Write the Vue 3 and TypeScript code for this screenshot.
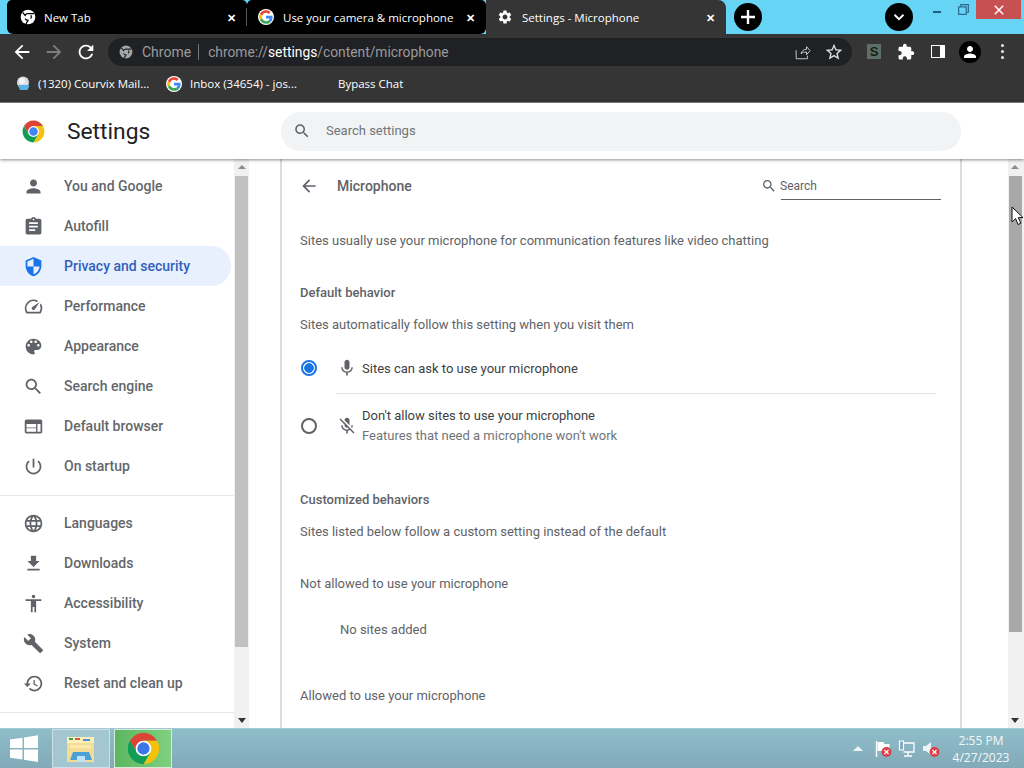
<template>
  <div class="screen">
    <!-- tab strip -->
    <div class="tabstrip">
      <div class="tab tab-dark tab-first">
        <svg class="tab-icon" viewBox="0 0 48 48">
          <circle cx="24" cy="24" r="22" fill="#fff" />
          <path d="M24 14a10 10 0 0 0-8.66 5L8 10M24 14h19M15.34 29a10 10 0 0 0 8.66 5l-6 11M33 19a10 10 0 0 1-1 10" fill="none" stroke="#000" stroke-width="4" />
          <circle cx="24" cy="24" r="7" fill="#fff" />
        </svg>
        <span class="tab-title">New Tab</span>
        <span class="tab-x">✕</span>
      </div>
      <div class="tab tab-dark tab-second">
        <svg class="tab-icon google" viewBox="-4 -4 56 56">
          <circle cx="24" cy="24" r="28" fill="#fff" />
          <path v-for="p in googlePaths" :key="p.fill" :d="p.d" :fill="p.fill" />
        </svg>
        <span class="tab-title">Use your camera &amp; microphone</span>
        <span class="tab-x">✕</span>
      </div>
      <div class="tab tab-active">
        <svg class="tab-icon" viewBox="0 0 24 24"><path :d="icons.gear" fill="#fff" /></svg>
        <span class="tab-title">Settings - Microphone</span>
        <span class="tab-x">✕</span>
      </div>
      <div class="round-btn new-tab">
        <svg viewBox="0 0 20 20" width="20" height="20"><path d="M10 3v14M3 10h14" stroke="#fff" stroke-width="2.4" /></svg>
      </div>
      <div class="strip-spacer"></div>
      <div class="round-btn">
        <svg viewBox="0 0 20 20" width="18" height="18"><path d="M5 7.5l5 5 5-5" fill="none" stroke="#fff" stroke-width="2" /></svg>
      </div>
      <div class="win-controls">
        <div class="win-btn"><span class="min-line"></span></div>
        <div class="win-btn">
          <svg viewBox="0 0 12 12" width="11" height="11"><path d="M3 3V.7h8.3V9H9M.7 3.2H9v8.1H.7z" fill="none" stroke="#2b6a8c" stroke-width="1.3" /></svg>
        </div>
        <div class="win-close">
          <svg viewBox="0 0 12 12" width="10" height="10"><path d="M1 1l10 10M11 1L1 11" stroke="#fff" stroke-width="1.8" /></svg>
        </div>
      </div>
    </div>

    <!-- toolbar -->
    <div class="toolbar">
      <div class="tool-btn"><svg viewBox="0 0 24 24" width="22" height="22"><path :d="icons.back" fill="#fff" /></svg></div>
      <div class="tool-btn"><svg class="flip" viewBox="0 0 24 24" width="22" height="22"><path :d="icons.back" fill="#7d7e80" /></svg></div>
      <div class="tool-btn"><svg viewBox="0 0 24 24" width="22" height="22"><path :d="icons.refresh" fill="#fff" /></svg></div>
      <div class="omnibox">
        <svg class="omni-logo" viewBox="0 0 48 48">
          <circle cx="24" cy="24" r="22" fill="#a5a6a8" />
          <path d="M24 14a10 10 0 0 0-8.66 5L8 10M24 14h19M15.34 29a10 10 0 0 0 8.66 5l-6 11M33 19a10 10 0 0 1-1 10" fill="none" stroke="#202124" stroke-width="4" />
        </svg>
        <span class="omni-chrome">Chrome</span>
        <span class="omni-sep"></span>
        <span class="omni-url">chrome://<b>settings</b>/content/microphone</span>
        <span class="omni-spacer"></span>
        <div class="omni-btn">
          <svg viewBox="0 0 20 20" width="18" height="18"><path d="M3.5 8v9.5H16V14M9 12c.4-3.200 3-5 6-5V4l4 4.500-4 4.500v-3c-2.500 0-4.700.6-6 1.800z" fill="none" stroke="#c4c5c7" stroke-width="1.100" /></svg>
        </div>
        <div class="omni-btn"><svg viewBox="0 0 24 24" width="20" height="20"><path :d="icons.star" fill="#dfe0e2" /></svg></div>
      </div>
      <div class="ext-group">
        <div class="tool-btn"><span class="ext-s">S</span></div>
        <div class="tool-btn"><svg viewBox="0 0 24 24" width="18" height="18"><path :d="icons.puzzle" fill="#fff" /></svg></div>
        <div class="tool-btn"><span class="side-panel"></span></div>
        <div class="tool-btn">
          <span class="avatar"><svg viewBox="0 0 24 24" width="18" height="18"><path :d="icons.person" fill="#fff" /></svg></span>
        </div>
        <div class="tool-btn"><span class="dots"><i></i><i></i><i></i></span></div>
      </div>
    </div>

    <!-- bookmarks -->
    <div class="bookmarks">
      <div class="bookmark bm-courvix">
        <svg class="bm-icon" viewBox="0 0 16 16">
          <circle cx="8" cy="6.500" r="6" fill="#d7dde2" />
          <path d="M3 9h10c1 0 1.500 1 1 2l-1.500 3H5z" fill="#5ab3e6" />
          <circle cx="7" cy="5" r="3" fill="#f2f4f5" />
        </svg>
        <span>(1320) Courvix Mail...</span>
      </div>
      <div class="bookmark bm-inbox">
        <svg class="bm-icon" viewBox="-4 -4 56 56">
          <circle cx="24" cy="24" r="28" fill="#fff" />
          <path v-for="p in googlePaths" :key="p.fill" :d="p.d" :fill="p.fill" />
        </svg>
        <span>Inbox (34654) - jos...</span>
      </div>
      <div class="bookmark bm-bypass"><span>Bypass Chat</span></div>
    </div>

    <!-- settings header -->
    <header class="settings-header">
      <svg class="settings-logo" viewBox="3 3 42 42">
        <path v-for="p in chromePaths" :key="p.fill" :d="p.d" :fill="p.fill" />
        <circle cx="24" cy="24" r="10" fill="#fff" />
        <circle cx="24" cy="24" r="7.800" fill="#4285f4" />
      </svg>
      <h1 class="settings-title">Settings</h1>
      <div class="search-box">
        <svg viewBox="0 0 24 24" width="18" height="18"><path :d="icons.search" fill="#5f6368" /></svg>
        <span>Search settings</span>
      </div>
    </header>

    <!-- body -->
    <div class="body">
      <nav class="sidebar">
        <div class="nav-list">
          <template v-for="(group, i) in navGroups" :key="i">
            <div v-for="item in group" :key="item.label" :class="['nav-item', { active: item.active }]">
              <svg viewBox="0 0 24 24" width="21" height="21" class="nav-icon"><path :d="item.icon" /></svg>
              <span>{{ item.label }}</span>
            </div>
            <div class="nav-divider"></div>
          </template>
        </div>
        <div class="scrollbar side-scroll">
          <span class="arrow-up"></span>
          <div class="thumb side-thumb"></div>
          <span class="track-fill"></span>
          <span class="arrow-down"></span>
        </div>
      </nav>

      <main class="content">
        <section class="card">
          <div class="card-head">
            <svg class="head-back" viewBox="0 0 24 24" width="20" height="20"><path :d="icons.back" fill="#5f6368" /></svg>
            <h2>Microphone</h2>
            <div class="card-search">
              <svg viewBox="0 0 24 24" width="16" height="16"><path :d="icons.search" fill="#5f6368" /></svg>
              <span>Search</span>
            </div>
          </div>

          <p class="line intro">Sites usually use your microphone for communication features like video chatting</p>
          <h3 class="line heading">Default behavior</h3>
          <p class="line sub">Sites automatically follow this setting when you visit them</p>

          <div class="radio-row first">
            <span class="radio checked"></span>
            <svg class="radio-icon" viewBox="0 0 24 24" width="20" height="20"><path :d="icons.mic" fill="#5f6368" /></svg>
            <span class="radio-label">Sites can ask to use your microphone</span>
          </div>
          <div class="radio-divider"></div>
          <div class="radio-row second">
            <span class="radio"></span>
            <svg class="radio-icon" viewBox="0 0 24 24" width="20" height="20"><path :d="icons.micOff" fill="#5f6368" /></svg>
            <div class="radio-text">
              <span class="radio-label">Don't allow sites to use your microphone</span>
              <span class="radio-sub">Features that need a microphone won't work</span>
            </div>
          </div>

          <h3 class="line heading custom">Customized behaviors</h3>
          <p class="line sub">Sites listed below follow a custom setting instead of the default</p>
          <p class="line block-title">Not allowed to use your microphone</p>
          <p class="line empty">No sites added</p>
          <p class="line allowed">Allowed to use your microphone</p>
        </section>

        <svg class="cursor" viewBox="0 0 13 20" width="13" height="20">
          <path d="M1 1v15l3.600-3.400 2.400 5.900 2.800-1.200-2.500-5.700H12z" fill="#fff" stroke="#111" stroke-width="1" />
        </svg>

        <div class="scrollbar main-scroll">
          <span class="arrow-up"></span>
          <div class="thumb main-thumb"></div>
          <span class="track-fill"></span>
          <span class="arrow-down"></span>
        </div>
      </main>
    </div>

    <!-- taskbar -->
    <footer class="taskbar">
      <div class="start">
        <svg viewBox="0 0 28 27" width="28" height="27">
          <path d="M0 4.500 12.500 2.700V13H0zM14 2.500 28 .3V13H14zM0 14.500h12.500v10L0 22.800zM14 14.500h14V27l-14-2.200z" fill="#fff" />
        </svg>
      </div>
      <div class="task-btn folder">
        <svg viewBox="0 0 32 32" width="32" height="32">
          <path d="M2 4h27v25H2z" fill="#f3dc94" />
          <path d="M2 4h27v6H2z" fill="#fbeeb9" />
          <path d="M4 5h4v2H4z" fill="#3fa34d" />
          <path d="M10 5h5v2h-5z" fill="#d9544d" />
          <path d="M18 6h7v2h-7z" fill="#4d8fd1" />
          <path d="M5 12h21v3H5z" fill="#f9e9ae" />
          <path d="M8 19h16l3 8H5z" fill="#4ba0d8" />
          <path d="M12 23h8v6h-8z" fill="#bfe3f5" />
        </svg>
      </div>
      <div class="task-btn chrome">
        <svg viewBox="3 3 42 42" width="33" height="33">
          <path v-for="p in chromePaths" :key="p.fill" :d="p.d" :fill="p.fill" />
          <circle cx="24" cy="24" r="10" fill="#fff" />
          <circle cx="24" cy="24" r="7.800" fill="#3b78e7" />
        </svg>
      </div>
      <div class="task-spacer"></div>
      <div class="tray">
        <span class="tray-chevron"></span>
        <div class="tray-icon">
          <svg viewBox="0 0 18 18" width="18" height="18">
            <path d="M2.500 1v16" stroke="#fff" stroke-width="1.400" />
            <path d="M3.500 2h6l1 2h5v7h-12z" fill="#fff" />
            <circle cx="12.500" cy="12" r="5" fill="#d9424a" />
            <path d="M10.500 10l4 4M14.500 10l-4 4" stroke="#fff" stroke-width="1.200" />
          </svg>
        </div>
        <div class="tray-icon">
          <svg viewBox="0 0 18 18" width="18" height="18">
            <path d="M5.500 3H16v9H5.500" fill="none" stroke="#fff" stroke-width="1.300" />
            <path d="M1.500 1h4v9h-4z" fill="#7fa8b8" stroke="#fff" stroke-width="1.200" />
            <path d="M10 12v3M6 16h8" stroke="#fff" stroke-width="1.400" />
          </svg>
        </div>
        <div class="tray-icon">
          <svg viewBox="0 0 18 18" width="18" height="18">
            <path d="M1 6h3l5-4v13l-5-4H1z" fill="#eef4f6" />
            <circle cx="12.500" cy="12" r="5" fill="#d9424a" />
            <path d="M10.500 10l4 4M14.500 10l-4 4" stroke="#fff" stroke-width="1.200" />
          </svg>
        </div>
      </div>
      <div class="clock">
        <span>2:55 PM</span>
        <span>4/27/2023</span>
      </div>
    </footer>
  </div>
</template>

<script setup lang="ts">
interface NavItem {
  label: string;
  icon: string;
  active?: boolean;
}

const icons = {
  person: 'M12 12c2.210 0 4-1.790 4-4s-1.790-4-4-4-4 1.790-4 4 1.790 4 4 4zm0 2c-2.670 0-8 1.340-8 4v2h16v-2c0-2.660-5.330-4-8-4z',
  assignment: 'M19 3h-4.180C14.400 1.840 13.300 1 12 1c-1.300 0-2.400.84-2.820 2H5c-1.100 0-2 .9-2 2v14c0 1.100.9 2 2 2h14c1.100 0 2-.9 2-2V5c0-1.100-.9-2-2-2zm-7 0c.55 0 1 .45 1 1s-.45 1-1 1-1-.45-1-1 .45-1 1-1zm2 14H7v-2h7v2zm3-4H7v-2h10v2zm0-4H7V7h10v2z',
  shield: 'M12 1L3 5v6c0 5.550 3.840 10.740 9 12 5.160-1.260 9-6.450 9-12V5l-9-4zm0 10.990h7c-.53 4.120-3.280 7.790-7 8.940V12H5V6.300l7-3.110v8.800z',
  speed: 'M20.380 8.570l-1.230 1.850a8 8 0 0 1-.22 7.580H5.070A8 8 0 0 1 15.580 6.850l1.850-1.230A10 10 0 0 0 3.350 19a2 2 0 0 0 1.720 1h13.850a2 2 0 0 0 1.740-1 10 10 0 0 0-.27-10.440zm-9.790 6.840a2 2 0 0 0 2.830 0l5.660-8.490-8.490 5.660a2 2 0 0 0 0 2.830z',
  palette: 'M12 3c-4.970 0-9 4.030-9 9s4.030 9 9 9c.83 0 1.500-.67 1.500-1.500 0-.39-.15-.74-.39-1.010-.23-.26-.38-.61-.38-.99 0-.83.67-1.500 1.500-1.500H16c2.760 0 5-2.240 5-5 0-4.420-4.030-8-9-8zm-5.500 9c-.83 0-1.500-.67-1.500-1.500S5.670 9 6.500 9 8 9.670 8 10.500 7.330 12 6.500 12zm3-4C8.670 8 8 7.330 8 6.500S8.670 5 9.500 5s1.500.67 1.500 1.500S10.330 8 9.500 8zm5 0c-.83 0-1.500-.67-1.500-1.500S13.670 5 14.500 5s1.500.67 1.500 1.500S15.330 8 14.500 8zm3 4c-.83 0-1.500-.67-1.500-1.500S16.670 9 17.500 9s1.500.67 1.500 1.500-.67 1.500-1.500 1.500z',
  search: 'M15.500 14h-.79l-.28-.27C15.410 12.590 16 11.110 16 9.500 16 5.910 13.090 3 9.500 3S3 5.910 3 9.500 5.910 16 9.500 16c1.610 0 3.090-.59 4.230-1.570l.27.28v.79l5 4.990L20.490 19l-4.990-5zm-6 0C7.010 14 5 11.990 5 9.500S7.010 5 9.500 5 14 7.010 14 9.500 11.990 14 9.500 14z',
  web: 'M20 4H4c-1.100 0-2 .9-2 2v12c0 1.100.9 2 2 2h16c1.100 0 2-.9 2-2V6c0-1.100-.9-2-2-2zM4 18v-4h11v4H4zm11-5H4V9h11v4zm5 5h-3.500V9H20v9z',
  power: 'M13 3h-2v10h2V3zm4.830 2.170l-1.420 1.420C17.990 7.860 19 9.810 19 12c0 3.870-3.130 7-7 7s-7-3.130-7-7c0-2.190 1.010-4.140 2.580-5.420L6.170 5.170C4.230 6.820 3 9.260 3 12c0 4.970 4.030 9 9 9s9-4.030 9-9c0-2.740-1.230-5.180-3.170-6.830z',
  language: 'M11.990 2C6.470 2 2 6.480 2 12s4.470 10 9.990 10C17.520 22 22 17.520 22 12S17.520 2 11.990 2zm6.930 6h-2.950c-.32-1.250-.78-2.450-1.380-3.560 1.840.63 3.370 1.910 4.330 3.560zM12 4.040c.83 1.200 1.480 2.530 1.910 3.960h-3.820c.43-1.430 1.080-2.760 1.910-3.960zM4.260 14C4.100 13.360 4 12.690 4 12s.1-1.360.26-2h3.380c-.08.66-.14 1.320-.14 2 0 .68.06 1.340.14 2H4.260zm.82 2h2.950c.32 1.250.78 2.450 1.380 3.560-1.840-.63-3.370-1.900-4.330-3.560zm2.950-8H5.080c.96-1.660 2.490-2.930 4.330-3.560C8.810 5.550 8.350 6.750 8.030 8zM12 19.960c-.83-1.200-1.480-2.530-1.910-3.960h3.820c-.43 1.430-1.080 2.760-1.910 3.960zM14.340 14H9.660c-.09-.66-.16-1.320-.16-2 0-.68.07-1.350.16-2h4.680c.09.65.16 1.320.16 2 0 .68-.07 1.340-.16 2zm.25 5.560c.6-1.110 1.060-2.310 1.380-3.560h2.950c-.96 1.650-2.490 2.930-4.330 3.560zM16.360 14c.08-.66.14-1.320.14-2 0-.68-.06-1.340-.14-2h3.380c.16.64.26 1.310.26 2s-.1 1.360-.26 2h-3.380z',
  download: 'M19 9h-4V3H9v6H5l7 7 7-7zM5 18v2h14v-2H5z',
  accessibility: 'M12 2c1.100 0 2 .9 2 2s-.9 2-2 2-2-.9-2-2 .9-2 2-2zm9 7h-6v13h-2v-6h-2v6H9V9H3V7h18v2z',
  wrench: 'M22.700 19l-9.100-9.100c.9-2.300.4-5-1.500-6.900-2-2-5-2.400-7.400-1.300L9 6 6 9 1.600 4.700C.4 7.100.9 10.100 2.900 12.100c1.900 1.900 4.600 2.400 6.900 1.500l9.100 9.100c.4.4 1 .4 1.400 0l2.300-2.300c.5-.4.5-1.100.1-1.400z',
  restore: 'M13 3c-4.970 0-9 4.030-9 9H1l3.890 3.890.07.14L9 12H6c0-3.870 3.130-7 7-7s7 3.130 7 7-3.130 7-7 7c-1.930 0-3.680-.79-4.940-2.060l-1.420 1.420C8.270 19.990 10.510 21 13 21c4.970 0 9-4.030 9-9s-4.030-9-9-9zm-1 5v5l4.280 2.540.72-1.210-3.500-2.080V8H12z',
  mic: 'M12 14c1.660 0 2.990-1.340 2.990-3L15 5c0-1.660-1.340-3-3-3S9 3.340 9 5v6c0 1.660 1.340 3 3 3zm5.300-3c0 3-2.540 5.100-5.300 5.100S6.700 14 6.700 11H5c0 3.410 2.720 6.230 6 6.720V21h2v-3.280c3.280-.48 6-3.300 6-6.720h-1.700z',
  micOff: 'M19 11h-1.700c0 .74-.16 1.430-.43 2.050l1.230 1.230c.56-.98.9-2.090.9-3.280zm-4.020.17c0-.06.02-.11.02-.17V5c0-1.660-1.340-3-3-3S9 3.340 9 5v.18l5.980 5.990zM4.270 3L3 4.270l6.010 6.010V11c0 1.660 1.330 3 2.990 3 .22 0 .44-.03.65-.08l1.660 1.660c-.71.33-1.500.52-2.310.52-2.760 0-5.300-2.100-5.300-5.100H5c0 3.410 2.720 6.230 6 6.720V21h2v-3.280c.91-.13 1.770-.45 2.540-.9L19.730 21 21 19.730 4.270 3z',
  back: 'M20 11H7.830l5.590-5.590L12 4l-8 8 8 8 1.410-1.410L7.830 13H20v-2z',
  refresh: 'M17.650 6.350C16.200 4.900 14.350 4 12 4c-4.420 0-7.990 3.580-7.990 8s3.570 8 7.990 8c3.730 0 6.840-2.550 7.730-6h-2.080c-.82 2.330-3.040 4-5.650 4-3.310 0-6-2.690-6-6s2.690-6 6-6c1.660 0 3.140.69 4.220 1.780L13 11h7V4l-2.350 2.350z',
  puzzle: 'M20.500 11H19V7c0-1.100-.9-2-2-2h-4V3.500C13 2.120 11.880 1 10.500 1S8 2.120 8 3.500V5H4c-1.100 0-1.990.9-1.990 2v3.800H3.500c1.490 0 2.700 1.210 2.700 2.700s-1.210 2.700-2.700 2.700H2V20c0 1.100.9 2 2 2h3.800v-1.500c0-1.490 1.210-2.700 2.700-2.700 1.490 0 2.700 1.210 2.700 2.700V22H17c1.100 0 2-.9 2-2v-4h1.500c1.380 0 2.500-1.120 2.500-2.500S21.880 11 20.500 11z',
  star: 'M22 9.240l-7.190-.62L12 2 9.190 8.630 2 9.240l5.460 4.730L5.820 21 12 17.270 18.180 21l-1.630-7.030L22 9.240zM12 15.400l-3.760 2.270 1-4.280-3.320-2.880 4.380-.38L12 6.100l1.710 4.040 4.380.38-3.320 2.880 1 4.280L12 15.400z',
  gear: 'M19.140 12.940c.04-.3.06-.61.06-.94 0-.32-.02-.64-.07-.94l2.030-1.580c.18-.14.23-.41.12-.61l-1.920-3.320c-.12-.22-.37-.29-.59-.22l-2.390.96c-.5-.38-1.030-.7-1.620-.94l-.36-2.540c-.04-.24-.24-.41-.48-.41h-3.840c-.24 0-.43.17-.47.41l-.36 2.540c-.59.24-1.130.57-1.620.94l-2.390-.96c-.22-.08-.47 0-.59.22L2.740 8.870c-.12.21-.08.47.12.61l2.030 1.580c-.05.3-.09.63-.09.94s.02.64.07.94l-2.030 1.580c-.18.14-.23.41-.12.61l1.920 3.320c.12.22.37.29.59.22l2.390-.96c.5.38 1.030.7 1.620.94l.36 2.540c.05.24.24.41.48.41h3.840c.24 0 .44-.17.47-.41l.36-2.540c.59-.24 1.130-.56 1.620-.94l2.390.96c.22.08.47 0 .59-.22l1.920-3.320c.12-.22.07-.47-.12-.61l-2.010-1.580zM12 15.600c-1.980 0-3.600-1.620-3.600-3.600s1.620-3.600 3.600-3.600 3.600 1.620 3.600 3.600-1.620 3.600-3.600 3.600z',
};

const navGroups: NavItem[][] = [
  [
    { label: 'You and Google', icon: icons.person },
    { label: 'Autofill', icon: icons.assignment },
    { label: 'Privacy and security', icon: icons.shield, active: true },
    { label: 'Performance', icon: icons.speed },
    { label: 'Appearance', icon: icons.palette },
    { label: 'Search engine', icon: icons.search },
    { label: 'Default browser', icon: icons.web },
    { label: 'On startup', icon: icons.power },
  ],
  [
    { label: 'Languages', icon: icons.language },
    { label: 'Downloads', icon: icons.download },
    { label: 'Accessibility', icon: icons.accessibility },
    { label: 'System', icon: icons.wrench },
    { label: 'Reset and clean up', icon: icons.restore },
  ],
];

const googlePaths = [
  { fill: '#EA4335', d: 'M24 9.500c3.540 0 6.710 1.220 9.210 3.600l6.850-6.850C35.900 2.380 30.470 0 24 0 14.620 0 6.510 5.380 2.560 13.220l7.980 6.190C12.430 13.720 17.740 9.500 24 9.500z' },
  { fill: '#4285F4', d: 'M46.980 24.550c0-1.570-.15-3.090-.38-4.550H24v9.020h12.940c-.58 2.960-2.260 5.480-4.780 7.180l7.730 6c4.510-4.180 7.090-10.360 7.090-17.650z' },
  { fill: '#FBBC05', d: 'M10.530 28.590c-.48-1.450-.76-2.990-.76-4.590s.27-3.140.76-4.590l-7.980-6.190C.92 16.460 0 20.120 0 24c0 3.880.92 7.540 2.560 10.780l7.970-6.190z' },
  { fill: '#34A853', d: 'M24 48c6.480 0 11.930-2.130 16.080-5.810l-7.730-6c-2.150 1.450-4.920 2.300-8.350 2.300-6.260 0-11.570-4.220-13.470-9.910l-7.980 6.190C6.510 42.620 14.620 48 24 48z' },
];

const chromePaths = [
  { fill: '#db4437', d: 'M6.680 14A20 20 0 0 1 41.320 14H24L15.340 29z' },
  { fill: '#f4c20d', d: 'M41.320 14A20 20 0 0 1 24 44L32.660 29 24 14z' },
  { fill: '#0f9d58', d: 'M24 44A20 20 0 0 1 6.680 14L15.340 29H32.660z' },
];
</script>

<style>
html,
body {
  margin: 0;
  overflow: hidden;
  background: #fff;
}
</style>

<style scoped>
.screen {
  width: 1024px;
  height: 768px;
  display: flex;
  flex-direction: column;
  overflow: hidden;
  font-family: Roboto, "Liberation Sans", sans-serif;
  font-size: 13px;
  color: #5f6368;
}

/* browser chrome */
.tabstrip {
  height: 34px;
  flex: none;
  display: flex;
  align-items: stretch;
  padding-left: 7px;
  background: #66d4f5;
  font-family: "Open Sans", "Noto Sans", sans-serif;
  font-size: 12px;
  color: #fff;
}

.tab {
  width: 240px;
  box-sizing: border-box;
  display: flex;
  align-items: center;
  padding: 0 11px 0 13px;
  border-radius: 5px 5px 0 0;
}

.tab-dark {
  background: #000;
}

.tab-first {
  border-bottom-left-radius: 6px;
  position: relative;
}

.tab-first .tab-icon {
  margin-right: 8px;
}

.tab-first::after {
  content: "";
  position: absolute;
  right: 0;
  top: 8px;
  height: 18px;
  width: 1px;
  background: #555;
}

.tab-second {
  width: 239px;
  border-bottom-right-radius: 6px;
  padding-left: 11px;
}

.tab-active {
  background: #353535;
  border-radius: 0 8px 0 0;
  padding-left: 11px;
}

.tab-icon {
  width: 16px;
  height: 16px;
  flex: none;
  margin-right: 9px;
}

.tab-title {
  flex: 1;
  min-width: 0;
  white-space: nowrap;
  font-size: 11.500px;
}

.tab-x {
  flex: none;
  margin-left: 8px;
  font-size: 11px;
  font-weight: 700;
}

.round-btn {
  width: 28px;
  height: 28px;
  margin-top: 3px;
  border-radius: 50%;
  background: #000;
  display: flex;
  align-items: center;
  justify-content: center;
}

.new-tab {
  margin-left: 8px;
}

.strip-spacer {
  flex: 1;
}

.win-controls {
  width: 111px;
  display: flex;
  align-items: flex-start;
  justify-content: flex-end;
  padding-right: 3px;
  box-sizing: border-box;
}

.win-btn {
  width: 26px;
  height: 19px;
  display: flex;
  align-items: center;
  justify-content: center;
}

.min-line {
  display: block;
  width: 8px;
  height: 2px;
  margin-top: 5px;
  background: #1d5f86;
}

.win-close {
  width: 45px;
  height: 19px;
  background: #c75050;
  display: flex;
  align-items: center;
  justify-content: center;
}

.toolbar {
  height: 35px;
  flex: none;
  display: flex;
  align-items: center;
  padding-left: 6px;
  background: #353535;
}

.tool-btn {
  width: 32px;
  height: 32px;
  display: flex;
  align-items: center;
  justify-content: center;
  flex: none;
}

.flip {
  transform: scaleX(-1);
}

.omnibox {
  width: 744px;
  height: 28px;
  margin-left: 6px;
  flex: none;
  display: flex;
  align-items: center;
  border-radius: 14px;
  background: #202124;
  font-size: 13.800px;
  color: #9a9b9d;
}

.omni-logo {
  width: 14px;
  height: 14px;
  margin-left: 11px;
  flex: none;
}

.omni-chrome {
  margin-left: 9px;
  font-size: 14px;
}

.omni-sep {
  width: 1px;
  height: 16px;
  margin: 0 9px 0 7px;
  background: #77787a;
}

.omni-url b {
  font-weight: 400;
  color: #fff;
}

.omni-spacer {
  flex: 1;
}

.omni-btn {
  width: 32px;
  height: 28px;
  display: flex;
  align-items: center;
  justify-content: center;
}

.omni-btn:last-child {
  margin-right: 2px;
}

.ext-group {
  display: flex;
  margin-left: 6px;
}

.ext-s {
  width: 14px;
  height: 15px;
  background: #5d6f66;
  color: #15201b;
  font: 700 13px/15px "Liberation Sans", sans-serif;
  text-align: center;
}

.side-panel {
  width: 9px;
  height: 13px;
  box-sizing: content-box;
  border: solid #fff;
  border-width: 0 5px 0 0;
  outline: 1.500px solid #fff;
  outline-offset: -1.500px;
  display: block;
}

.avatar {
  width: 22px;
  height: 22px;
  border-radius: 50%;
  background: #000;
  display: flex;
  align-items: center;
  justify-content: center;
}

.dots {
  display: flex;
  flex-direction: column;
  gap: 3px;
}

.dots i {
  display: block;
  width: 3px;
  height: 3px;
  border-radius: 50%;
  background: #e8eaed;
}

.bookmarks {
  height: 33px;
  flex: none;
  display: flex;
  align-items: center;
  padding-bottom: 4px;
  box-sizing: border-box;
  background: #353535;
  font-family: "Open Sans", "Noto Sans", sans-serif;
  font-size: 11.500px;
  color: #fff;
}

.bookmark {
  display: flex;
  align-items: center;
  white-space: nowrap;
}

.bm-icon {
  width: 16px;
  height: 16px;
  margin-right: 8px;
  flex: none;
}

.bm-courvix {
  width: 151px;
  padding-left: 15px;
  box-sizing: border-box;
}

.bm-courvix .bm-icon {
  margin-right: 7px;
}

.bm-inbox {
  width: 187px;
  padding-left: 15px;
  box-sizing: border-box;
}

/* settings page */
.settings-header {
  height: 57px;
  flex: none;
  position: relative;
  z-index: 2;
  display: flex;
  align-items: center;
  padding-left: 22px;
  border-top: 1px solid #77787a;
  box-sizing: border-box;
  background: #fff;
  box-shadow: 0 1px 3px rgba(0, 0, 0, 0.45);
}

.settings-logo {
  width: 23px;
  height: 23px;
  flex: none;
}

.settings-title {
  width: 214px;
  margin: 0 0 0 22px;
  font-size: 22.800px;
  font-weight: 400;
  color: #202124;
}

.search-box {
  width: 680px;
  height: 39px;
  box-sizing: border-box;
  display: flex;
  align-items: center;
  gap: 15px;
  padding: 0 0 1px 12px;
  border-radius: 20px;
  background: #f1f3f4;
  color: #70757a;
  font-size: 13px;
}

.body {
  flex: 1;
  min-height: 0;
  display: flex;
  background: #fff;
}

.sidebar {
  width: 249px;
  flex: none;
  display: flex;
}

.nav-list {
  flex: 1;
  padding-top: 7px;
}

.nav-item {
  height: 40px;
  width: 231px;
  box-sizing: border-box;
  display: flex;
  align-items: center;
  gap: 20px;
  padding-left: 23px;
  border-radius: 0 20px 20px 0;
  font-size: 14px;
  font-weight: 500;
  color: #63676b;
}

.nav-item.active {
  background: #e8f0fe;
  color: #3260bb;
}

.nav-icon {
  fill: #5f6368;
  flex: none;
}

.active .nav-icon {
  fill: #1a73e8;
}

.nav-divider {
  height: 1px;
  margin: 9px 0 7px;
  background: #e8e8e8;
}

.scrollbar {
  width: 15px;
  flex: none;
  display: flex;
  flex-direction: column;
  align-items: center;
  background: #f1f1f1;
}

.main-scroll {
  width: 16px;
  padding-right: 2px;
  box-sizing: border-box;
}

.arrow-up,
.arrow-down {
  display: block;
  width: 0;
  height: 0;
  flex: none;
  border-left: 4px solid transparent;
  border-right: 4px solid transparent;
}

.arrow-up {
  margin: 6px 0 7px;
  border-bottom: 4px solid #8a8a8a;
}

.arrow-down {
  margin: 6px 0 5px;
  border-top: 5px solid #333;
}

.thumb {
  width: 13px;
  flex: none;
}

.side-thumb {
  height: 471px;
  background: #c1c1c1;
}

.main-thumb {
  height: 456px;
  background: #a8a8a8;
}

.track-fill {
  flex: 1;
}

.content {
  flex: 1;
  min-width: 0;
  position: relative;
  display: flex;
  justify-content: space-between;
  padding-left: 31px;
}

.card {
  width: 682px;
  box-sizing: border-box;
  border: solid #dcdcdc;
  border-width: 0 2px;
  padding-top: 7px;
  overflow: hidden;
}

.card-head {
  height: 40px;
  display: flex;
  align-items: center;
  padding: 0 19px 0 17px;
}

.head-back {
  flex: none;
}

.card-head h2 {
  flex: 1;
  margin: 0 0 0 18px;
  font-size: 14px;
  font-weight: 500;
  color: #5f6368;
}

.card-search {
  width: 180px;
  height: 27px;
  box-sizing: border-box;
  display: flex;
  align-items: center;
  gap: 3px;
  font-size: 12px;
  color: #5f6368;
  background: linear-gradient(#5f6368, #5f6368) no-repeat 20px 100% / 160px 1px;
}

.line {
  height: 20px;
  margin: 0;
  padding-left: 18px;
  font-size: 13px;
  font-weight: 400;
  line-height: 20px;
  color: #5f6368;
}

.intro {
  margin-top: 25px;
}

.heading {
  margin-top: 32px;
  font-weight: 500;
}

.sub {
  margin-top: 12px;
}

.block-title {
  margin-top: 32px;
}

.empty {
  margin-top: 26px;
  padding-left: 58px;
}

.allowed {
  margin-top: 46px;
}

.radio-row {
  display: flex;
  align-items: center;
  padding-left: 19px;
}

.radio-row.first {
  height: 50px;
  margin-top: 8px;
}

.radio-row.second {
  height: 64px;
}

.radio {
  width: 16px;
  height: 16px;
  box-sizing: border-box;
  flex: none;
  border: 2px solid #5f6368;
  border-radius: 50%;
}

.radio.checked {
  border-color: #1a73e8;
  background: radial-gradient(circle, #1a73e8 0 4.500px, transparent 5px);
}

.radio-icon {
  flex: none;
  margin-left: 20px;
}

.radio-row > .radio-label,
.radio-text {
  margin-left: 5px;
}

.radio-text {
  display: flex;
  flex-direction: column;
}

.radio-text span {
  height: 20px;
  line-height: 20px;
}

.radio-label {
  color: #3c4043;
}

.radio-sub {
  color: #70757a;
}

.radio-divider {
  height: 1px;
  margin: 0 24px 0 54px;
  background: #e4e4e4;
}

.cursor {
  position: absolute;
  left: 762px;
  top: 47px;
}

/* taskbar */
.taskbar {
  height: 40px;
  flex: none;
  display: flex;
  align-items: stretch;
  background: linear-gradient(#8fbecb, #82a9b8);
  border-top: 1px solid #a4c8d3;
  box-sizing: border-box;
}

.start {
  width: 52px;
  flex: none;
  box-sizing: border-box;
  display: flex;
  align-items: center;
  padding-left: 10px;
}

.task-btn {
  width: 58px;
  flex: none;
  box-sizing: border-box;
  display: flex;
  align-items: center;
  justify-content: center;
  border: 1px solid rgba(255, 255, 255, 0.45);
}

.folder {
  background: #a3c6d1;
}

.chrome {
  margin-left: 4px;
  background: linear-gradient(90deg, #5cb661, #7fd07f);
  border-color: #d6ecd6;
}

.task-spacer {
  flex: 1;
}

.tray {
  display: flex;
  align-items: center;
  gap: 6px;
}

.tray-chevron {
  width: 0;
  height: 0;
  margin-right: 5px;
  border-left: 5px solid transparent;
  border-right: 5px solid transparent;
  border-bottom: 5px solid #eef4f6;
}

.tray-icon {
  width: 18px;
  height: 18px;
  display: flex;
}

.clock {
  width: 70px;
  margin-left: 6px;
  margin-right: 8px;
  display: flex;
  flex-direction: column;
  justify-content: center;
  align-items: center;
  gap: 2px;
  font-family: "Open Sans", "Noto Sans", sans-serif;
  font-size: 12px;
  line-height: 15px;
  color: #f4f8f9;
}
</style>
